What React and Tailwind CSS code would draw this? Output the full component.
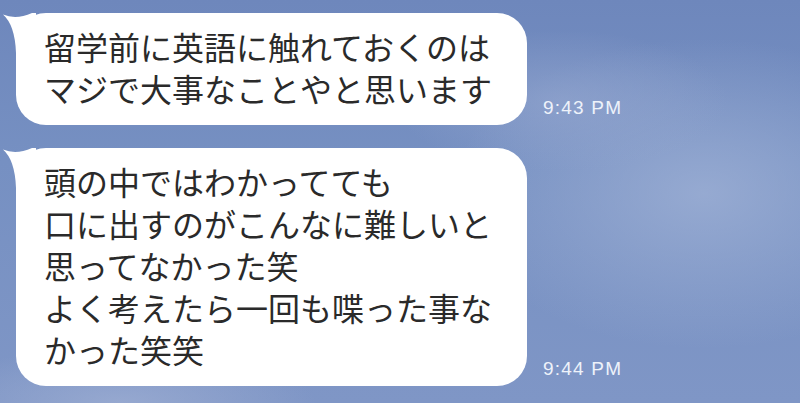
import React from 'react';

const jp = { fontFamily: '"Noto Sans CJK JP", "Noto Sans", sans-serif' };
const num = { fontFamily: '"Liberation Sans", Arial, sans-serif' };

const Tail = () => (
  <svg className="absolute left-[-14px] top-0" width="34" height="40" viewBox="0 0 34 40">
    <path d="M1 1.5 Q 14 7 30 0 L 34 0 L 34 40 L 14 40 Q 13 12 1 1.5 Z" fill="#ffffff" />
  </svg>
);

const Message = ({ lines, time }) => (
  <div className="flex items-end">
    <div className="relative w-[511px] rounded-[30px] bg-white pl-[28px] pr-6 pt-[12px] pb-[16px]">
      <Tail />
      <div className="relative text-[32px] leading-[42px] text-[#2a2a2a]" style={jp}>
        {lines.map((l, i) => (
          <div key={i} className="whitespace-nowrap">{l}</div>
        ))}
      </div>
    </div>
    <span
      className="ml-4 mb-[8px] text-[19px] leading-none tracking-[1.2px] text-[#eef2fa]"
      style={num}
    >
      {time}
    </span>
  </div>
);

export default function App() {
  return (
    <div className="relative w-[800px] h-[403px] overflow-hidden bg-[#7a91c2]">
      {/* sky / cloud wash */}
      <div className="absolute inset-0 bg-[linear-gradient(180deg,#6e87bc_0%,#7690c2_40%,#7f96c6_100%)]" />
      <div className="absolute inset-0 bg-[radial-gradient(ellipse_45%_55%_at_88%_48%,rgba(160,178,214,0.75),rgba(160,178,214,0)_70%)]" />
      <div className="absolute inset-0 bg-[radial-gradient(ellipse_30%_25%_at_70%_25%,rgba(150,168,208,0.6),rgba(150,168,208,0)_70%)]" />
      <div className="absolute inset-0 bg-[radial-gradient(ellipse_35%_20%_at_15%_100%,rgba(160,176,212,0.7),rgba(160,176,212,0)_70%)]" />

      <div className="relative flex flex-col gap-[23px] pl-4 pt-[13px]">
        <Message
          lines={['留学前に英語に触れておくのは', 'マジで大事なことやと思います']}
          time="9:43 PM"
        />
        <Message
          lines={[
            '頭の中ではわかってても',
            '口に出すのがこんなに難しいと',
            '思ってなかった笑',
            'よく考えたら一回も喋った事な',
            'かった笑笑',
          ]}
          time="9:44 PM"
        />
      </div>
    </div>
  );
}
